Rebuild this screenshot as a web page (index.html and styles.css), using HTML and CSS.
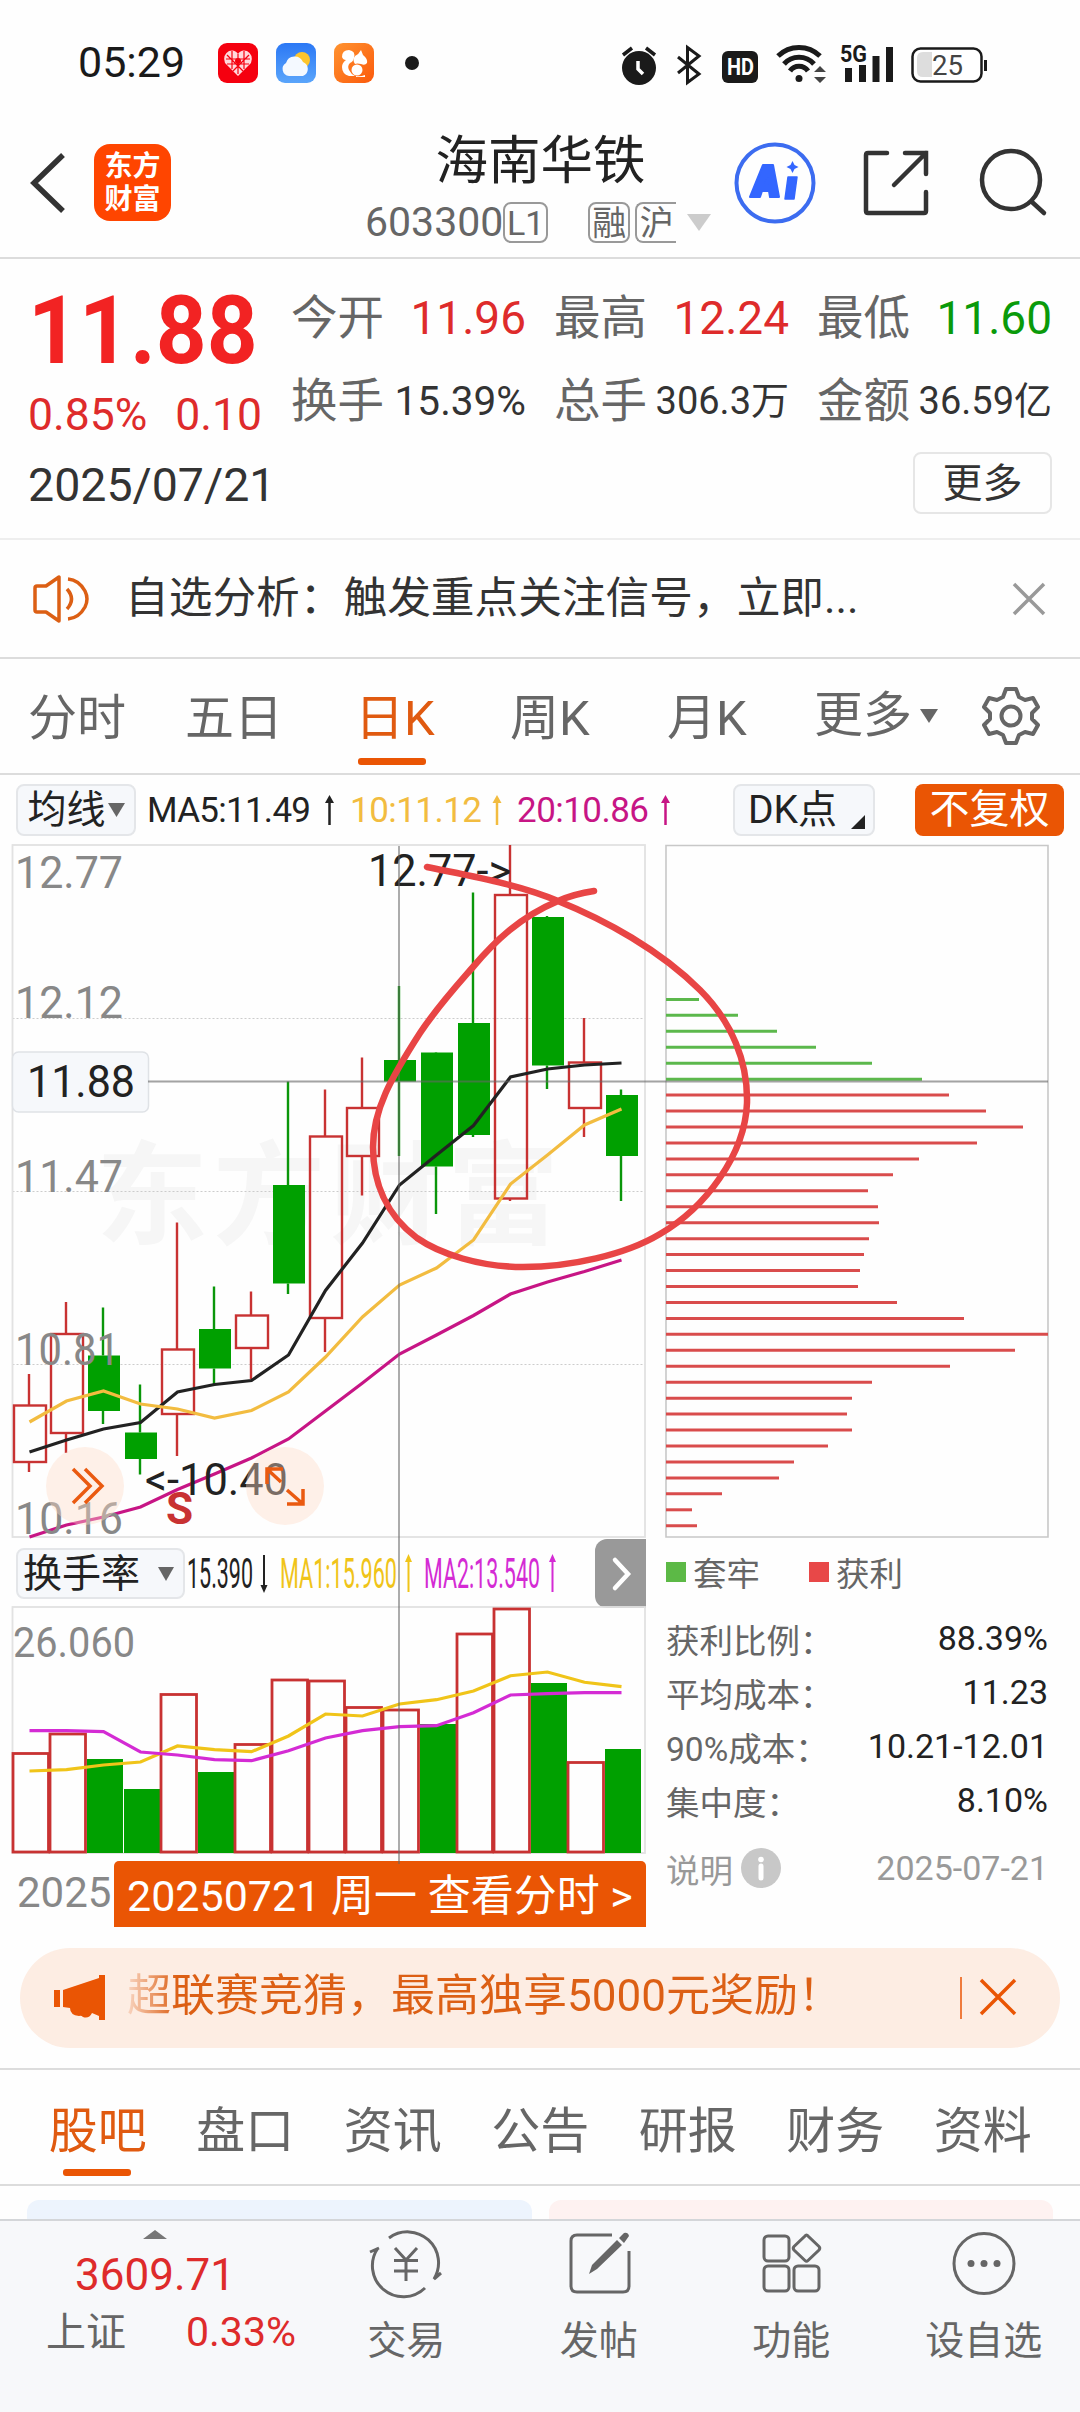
FILE: index.html
```html
<!DOCTYPE html>
<html lang="zh-CN">
  <head>
    <meta charset="UTF-8" />
    <meta name="viewport" content="width=device-width, initial-scale=1.0" />
    <title>海南华铁 603300</title>
    <link rel="stylesheet" href="styles.css">
  </head>
  <body>
    <div class="statusbar">
      <span class="clock">05:29</span>
      <svg class="app" width="40" height="40" viewBox="0 0 40 40">
        <rect width="40" height="40" rx="9" fill="#f5000f" />
        <path d="M20 33 L7 20 Q4 12 11 8 Q17 6 20 11 Q23 6 29 8 Q36 12 33 20 Z" fill="#ffd9dc" />
        <path d="M8 16h24M9 21h22M14 8v18M20 11v20M26 8v18M9 12l16 16M31 12L15 28" stroke="#f5000f" stroke-width="1.2" fill="none" />
        <circle cx="20" cy="18" r="3" fill="#f5000f" />
      </svg>
      <svg class="app" width="40" height="40" viewBox="0 0 40 40">
        <defs>
          <linearGradient id="sky" x1="0" y1="0" x2="0" y2="1">
            <stop offset="0" stop-color="#2b78f5" /><stop offset="1" stop-color="#5aa5fb" />
          </linearGradient>
        </defs>
        <rect width="40" height="40" rx="9" fill="url(#sky)" />
        <circle cx="26" cy="17" r="8" fill="#fdc52c" />
        <path d="M13 33a7 7 0 0 1-3-13a9 9 0 0 1 17-1a7.500 7.500 0 0 1 0 14z" fill="#f4f9ff" />
      </svg>
      <svg class="app" width="40" height="40" viewBox="0 0 40 40">
        <defs>
          <linearGradient id="uc" x1="0" y1="0" x2="1" y2="1">
            <stop offset="0" stop-color="#ff9330" /><stop offset="1" stop-color="#fb5a0c" />
          </linearGradient>
        </defs>
        <rect width="40" height="40" rx="9" fill="url(#uc)" />
        <path d="M8 14q0-7 7-7q7 1 5 8q-1 4-4 5q-3 3-1 7q2 4 6 6h-6q-7-2-7-9q0-4 4-7q-3 0-4-3z" fill="#fff" />
        <path d="M27 7l2 5q5 4 4 8q-2 3-6 1q-4-1-6 0q-3-4 0-8q4-2 6-6z" fill="#fff" />
        <circle cx="23" cy="27" r="5.500" fill="#fff" />
        <path d="M22 33q4 1 9-1v2h-9z" fill="#fff" />
      </svg>
      <span class="dot"></span>
      <svg class="sys" width="400" height="50" viewBox="600 35 400 50">
        <circle cx="639" cy="65" r="17" fill="#1a1a1a" />
        <path d="M638 58v8l5 5" stroke="#fff" stroke-width="3.500" fill="none" />
        <path d="M623 52l9-7M655 52l-9-7" stroke="#1a1a1a" stroke-width="3.500" />
        <path d="M678 54l21 17l-11.500 8.500v-35l11.500 8.500l-21 17" stroke="#1a1a1a" stroke-width="3" fill="none" />
        <rect x="722" y="48" width="36" height="32" rx="6" fill="#1a1a1a" />
        <text x="727" y="72" class="hd" textLength="27" lengthAdjust="spacingAndGlyphs">HD</text>
        <path d="M778 53a30 30 0 0 1 42 0M784 61a20 20 0 0 1 30 0M790 68a11 11 0 0 1 18 0" stroke="#1a1a1a" stroke-width="5" fill="none" />
        <circle cx="799" cy="75.500" r="3.500" fill="#1a1a1a" />
        <path d="M814 69h12l-6-6zM814 74h12l-6 6z" fill="#444" />
        <text x="840" y="59" class="g5" textLength="27" lengthAdjust="spacingAndGlyphs">5G</text>
        <path d="M848.500 65v14M862.500 62v17M876 53v26M889.500 44v35" stroke="#1a1a1a" stroke-width="7" />
        <rect x="912.500" y="45.500" width="69" height="33" rx="8" fill="#fff" stroke="#1a1a1a" stroke-width="2.500" />
        <path d="M932 49h-9q-6 0-6 6v13q0 6 6 6h9z" fill="#ddd" />
        <text x="932" y="72" class="batt" textLength="31" lengthAdjust="spacingAndGlyphs">25</text>
        <path d="M985.500 57v11" stroke="#1a1a1a" stroke-width="3" />
      </svg>
    </div>

    <div class="header">
      <div class="header-left">
        <svg width="40" height="64" viewBox="0 0 40 64">
          <path d="M35 4L6 32L35 60" stroke="#333" stroke-width="5.500" fill="none" />
        </svg>
        <div class="logo"><span>东方</span><span>财富</span></div>
      </div>
      <div class="stock">
        <div class="stock-name">海南华铁</div>
        <div class="stock-code">
          <span>603300</span><span class="tag l1">L1</span><span class="tag rong">融</span><span class="tag hu">沪</span>
          <svg width="24" height="17" viewBox="0 0 24 17"><path d="M0 0h24L12 17z" fill="#ccc" /></svg>
        </div>
      </div>
      <svg class="header-icons" width="330" height="90" viewBox="725 138 330 90">
        <circle cx="775" cy="183" r="38.500" fill="none" stroke="#3c6cf0" stroke-width="4" />
        <path d="M750 197L763 165H773L779 197H770L769 191H762L760 197ZM765 184H768V178Z" fill="#3366ff" fill-rule="evenodd" stroke="#3366ff" stroke-width="2" stroke-linejoin="round" />
        <path d="M788 177h9l-3 22h-9z" fill="#3366ff" stroke="#3366ff" stroke-width="1.500" stroke-linejoin="round" />
        <path d="M792.500 161l2 4l4 2l-4 2l-2 4l-2-4l-4-2l4-2z" fill="#3366ff" />
        <g stroke="#333" stroke-width="4.500" fill="none" stroke-linecap="round">
          <path d="M887 153H868Q866 153 866 155V211Q866 213 868 213H924Q926 213 926 211V192M905 153H926V174M926 153L894 185" />
          <circle cx="1011" cy="180" r="29" />
          <path d="M1032 202L1044 213" />
        </g>
      </svg>
    </div>

    <div class="quote">
      <div class="quote-top">
        <div class="price-box">
          <div class="price"><span>11.88</span></div>
          <div class="change"><span>0.85%</span><span>0.10</span></div>
        </div>
        <div class="stats">
          <div class="stat"><span>今开</span><b class="up">11.96</b></div>
          <div class="stat"><span>最高</span><b class="up">12.24</b></div>
          <div class="stat"><span>最低</span><b class="down">11.60</b></div>
          <div class="stat small"><span>换手</span><b class="rate">15.39%</b></div>
          <div class="stat small"><span>总手</span><b>306.3万</b></div>
          <div class="stat small"><span>金额</span><b>36.59亿</b></div>
        </div>
      </div>
      <div class="quote-bottom">
        <span class="date">2025/07/21</span>
        <span class="more">更多</span>
      </div>
    </div>

    <div class="notice">
      <svg width="60" height="50" viewBox="0 0 60 50">
        <path d="M3 14Q3 12 5 12H14L27 3V47L14 38H5Q3 38 3 36Z" stroke="#dc5f14" stroke-width="3.500" fill="none" stroke-linejoin="round" />
        <path d="M35 15Q44 25 35 35M36 5Q47 6 53 17Q57 25 53 33Q47 44 36 45" stroke="#dc5f14" stroke-width="3.500" fill="none" />
      </svg>
      <span class="notice-text">自选分析：触发重点关注信号，立即...</span>
      <svg width="34" height="34" viewBox="0 0 34 34"><path d="M2 2L32 32M32 2L2 32" stroke="#999" stroke-width="3.500" /></svg>
    </div>

    <div class="periods">
      <span class="p1">分时</span>
      <span class="p2">五日</span>
      <span class="p3 active">日K</span>
      <span class="p4">周K</span>
      <span class="p5">月K</span>
      <span class="p6">更多<svg width="18" height="14" viewBox="0 0 18 14"><path d="M0 0h18L9 14z" fill="#666" /></svg></span>
      <svg class="gear" width="60" height="60" viewBox="-30 -30 60 60">
        <path d="M-5 -27H5L8 -19L14 -16L22 -18L27 -9L21 -3V3L27 9L22 18L14 16L8 19L5 27H-5L-8 19L-14 16L-22 18L-27 9L-21 3V-3L-27 -9L-22 -18L-14 -16L-8 -19Z" stroke="#666" stroke-width="4" fill="none" stroke-linejoin="round" />
        <circle r="9.500" stroke="#666" stroke-width="4" fill="none" />
      </svg>
    </div>

    <div class="mabar">
      <div class="btn">均线<svg width="17" height="14" viewBox="0 0 17 14"><path d="M0 0h17L8.500 14z" fill="#666" /></svg></div>
      <svg class="ma" width="530" height="40" viewBox="145 790 530 40">
        <text x="147" y="822" fill="#222" textLength="164">MA5:11.49</text>
        <text x="350" y="822" fill="#f2bc40" textLength="132">10:11.12</text>
        <text x="517" y="822" fill="#c71585" textLength="132">20:10.86</text>
        <g stroke-width="2.500">
          <path d="M329.500 799V825" stroke="#222" /><path d="M325 803l4.500-8l4.500 8z" fill="#222" />
          <path d="M497 799V825" stroke="#f2bc40" /><path d="M492.500 803l4.500-8l4.500 8z" fill="#f2bc40" />
          <path d="M665.500 799V825" stroke="#c71585" /><path d="M661 803l4.500-8l4.500 8z" fill="#c71585" />
        </g>
      </svg>
      <div class="btn dk">DK点<svg width="14" height="14" viewBox="0 0 14 14"><path d="M14 0V14H0z" fill="#222" /></svg></div>
      <div class="btn orange">不复权</div>
    </div>

    <div class="charts">
      <div class="left">
        <svg id="kline" width="660" height="700" viewBox="0 840 660 700"></svg>
        <div class="volbar">
          <div class="btn">换手率<svg width="16" height="14" viewBox="0 0 16 14"><path d="M0 0h16L8 14z" fill="#666" /></svg></div>
          <svg class="vma" width="400" height="50" viewBox="187 1548 400 50">
            <text x="187" y="1588" fill="#222" textLength="66" lengthAdjust="spacingAndGlyphs">15.390</text>
            <text x="280" y="1588" fill="#f0c419" textLength="117" lengthAdjust="spacingAndGlyphs">MA1:15.960</text>
            <text x="424" y="1588" fill="#d42bd4" textLength="116" lengthAdjust="spacingAndGlyphs">MA2:13.540</text>
            <g stroke-width="2">
              <path d="M264 1555V1588" stroke="#222" /><path d="M260.500 1585h7l-3.500 8z" fill="#222" />
              <path d="M408.500 1559V1592" stroke="#f0c419" /><path d="M405 1562h7l-3.500-8z" fill="#f0c419" />
              <path d="M552.500 1559V1592" stroke="#d42bd4" /><path d="M549 1562h7l-3.500-8z" fill="#d42bd4" />
            </g>
          </svg>
          <div class="next"><svg width="20" height="34" viewBox="0 0 20 34"><path d="M3 3L16 17L3 31" stroke="#fff" stroke-width="4.500" fill="none" stroke-linecap="round" /></svg></div>
        </div>
        <svg id="volume" width="660" height="252" viewBox="0 1606 660 252"></svg>
        <div class="dates">
          <span class="year">2025</span>
          <span class="view">20250721 周一 查看分时 &gt;</span>
        </div>
      </div>
      <div class="right">
        <svg id="chips" width="420" height="700" viewBox="660 840 420 700"></svg>
        <div class="legend"><i class="green"></i>套牢<i class="red"></i>获利</div>
        <div class="info"><span>获利比例：</span><b>88.39%</b></div>
        <div class="info"><span>平均成本：</span><b>11.23</b></div>
        <div class="info"><span>90%成本：</span><b>10.21-12.01</b></div>
        <div class="info"><span>集中度：</span><b>8.10%</b></div>
        <div class="info note">
          <span>说明</span>
          <svg width="40" height="40" viewBox="0 0 40 40">
            <circle cx="20" cy="20" r="20" fill="#c8c8c8" />
            <circle cx="20" cy="11.500" r="2.800" fill="#fff" />
            <path d="M20 18v12" stroke="#fff" stroke-width="5" stroke-linecap="round" />
          </svg>
          <b>2025-07-21</b>
        </div>
      </div>
      <!-- crosshair and hand-drawn mark over both charts -->
      <svg class="overlay" width="1080" height="1090" viewBox="0 840 1080 1090">
        <path d="M148 1081.500H1048M399 846V1864" stroke="#666" stroke-opacity=".6" stroke-width="1.800" />
        <path d="M427 867C470 876 518 884 558 901C605 920 660 950 700 990C732 1022 748 1062 747 1103C745 1155 705 1208 660 1234C625 1255 570 1267 523 1267C480 1267 440 1254 417 1238C386 1215 373 1182 373 1147C373 1110 391 1078 420 1033C438 1006 460 982 473 967C495 941 520 917 558 901Q574 894 594 891" stroke="#e84545" stroke-width="6.500" fill="none" stroke-linecap="round" />
      </svg>
    </div>

    <div class="banner">
      <svg width="54" height="46" viewBox="0 0 54 46">
        <path d="M1 15h6v17H1zM10 15L46 3V0H52V45H46V41L39 38Q36 44 30 42Q28 40 26 41Q17 40 17 33L10 32Z" fill="#ea5504" />
      </svg>
      <span class="banner-text">超联赛竞猜，最高独享5000元奖励！</span>
      <svg class="banner-close" width="60" height="42" viewBox="0 0 60 42">
        <path d="M1 0V42" stroke="#ea5504" stroke-width="1.500" />
        <path d="M21 3L55 37M55 3L21 37" stroke="#ea5504" stroke-width="3.500" />
      </svg>
    </div>

    <div class="sections">
      <span class="active">股吧</span>
      <span>盘口</span>
      <span>资讯</span>
      <span>公告</span>
      <span>研报</span>
      <span>财务</span>
      <span>资料</span>
    </div>
    <div class="cards"><div class="card blue"></div><div class="card pink"></div></div>

    <div class="toolbar">
      <div class="index">
        <svg width="24" height="9" viewBox="0 0 24 9"><path d="M0 9L12 0L24 9z" fill="#777" /></svg>
        <div class="index-val">3609.71</div>
        <div class="index-row"><span>上证</span><b>0.33%</b></div>
      </div>
      <div class="tool">
        <svg width="80" height="70" viewBox="366 2228 80 70" fill="none" stroke="#666" stroke-width="3">
          <path d="M389 2238A31 31 0 0 1 434 2279L441 2273M378 2248A31 31 0 0 0 425 2288M370 2252L379 2248" />
          <path d="M395 2248L406 2260L417 2248M406 2259V2281M394 2260.500H418M394 2271H418" />
        </svg>
        <span>交易</span>
      </div>
      <div class="tool">
        <svg width="80" height="70" viewBox="558 2228 80 70" fill="none" stroke="#666" stroke-width="3">
          <path d="M611 2235H576Q570 2235 570 2241V2286Q570 2292 576 2292H622Q628 2292 628 2286V2251" />
          <path d="M588 2274L591 2265L616 2240L621 2245L596 2269ZM618 2238L623 2233Q627 2232 628 2236L623 2243Z" fill="#666" stroke="none" />
        </svg>
        <span>发帖</span>
      </div>
      <div class="tool">
        <svg width="80" height="70" viewBox="750 2228 80 70" fill="none" stroke="#666" stroke-width="3">
          <rect x="763" y="2236" width="25" height="25" rx="4" />
          <rect x="763" y="2266" width="25" height="25" rx="4" />
          <rect x="793" y="2266" width="25" height="25" rx="4" />
          <path d="M804 2236Q805.500 2234 807 2236L818 2246.500Q819.500 2248 818 2250L807 2260.500Q805.500 2262 804 2260.500L793 2250Q791.500 2248 793 2246.500Z" />
        </svg>
        <span>功能</span>
      </div>
      <div class="tool">
        <svg width="80" height="70" viewBox="943 2228 80 70" fill="none" stroke="#666" stroke-width="3">
          <circle cx="983" cy="2263.500" r="30" />
          <g fill="#666" stroke="none"><circle cx="970" cy="2263.500" r="3.500" /><circle cx="983" cy="2263.500" r="3.500" /><circle cx="996" cy="2263.500" r="3.500" /></g>
        </svg>
        <span>设自选</span>
      </div>
    </div>
    <script src="script.js"></script>
  </body>
</html>
```
FILE: styles.css
```css
* {
  box-sizing: border-box;
}
body {
  margin: 0;
  width: 1080px;
  height: 2412px;
  overflow: hidden;
  background: #fefefe;
  color: #333;
  font-family: Roboto, "Noto Sans CJK SC", sans-serif;
}
svg {
  display: block;
  flex: none;
  overflow: visible;
}
b {
  font-weight: normal;
}
.statusbar {
  display: flex;
  align-items: center;
  height: 90px;
  padding: 35px 80px 0 78px;
  line-height: 55px;
}
.clock {
  width: 141px;
  font-size: 43px;
  color: #1a1a1a;
}
.app {
  margin-right: 18px;
}
.dot {
  width: 14px;
  height: 14px;
  margin-left: 13px;
  border-radius: 50%;
  background: #1a1a1a;
}
.sys {
  margin-left: 181px;
}
.hd {
  font: bold 24px Roboto;
  fill: #fff;
}
.g5 {
  font: bold 24px Roboto;
  fill: #1a1a1a;
}
.batt {
  font: 27px Roboto;
  fill: #444;
}
.header {
  display: flex;
  height: 169px;
  border-bottom: 2px solid #dcdcdc;
}
.header-left {
  display: flex;
  align-items: center;
  width: 365px;
  padding: 18px 0 0 28px;
}
.logo {
  width: 77px;
  height: 77px;
  margin-left: 26px;
  padding-top: 6px;
  border-radius: 16px;
  background: #ff4500;
  color: #fff;
  font-size: 28px;
  font-weight: bold;
  line-height: 33px;
  text-align: center;
}
.logo span {
  display: block;
}
.stock {
  width: 351px;
  padding-top: 38px;
}
.stock-name {
  height: 66px;
  font-size: 52.500px;
  line-height: 66px;
  text-align: center;
  color: #222;
}
.stock-code {
  display: flex;
  align-items: center;
  height: 56px;
  font-size: 41px;
  color: #666;
}
.tag {
  height: 41px;
  border: 2px solid #999;
  border-radius: 8px;
  font-size: 34px;
  line-height: 38px;
  text-align: center;
}
.l1 {
  width: 45px;
}
.rong {
  width: 42px;
  margin-left: 40px;
}
.hu {
  width: 41px;
  margin: 0 11px 0 5px;
  border-right: none;
  border-radius: 8px 0 0 8px;
}
.header-icons {
  margin: 48px 0 0 9px;
}
.quote {
  height: 281px;
  padding: 24px 28px 0;
  border-bottom: 2px solid #eee;
}
.quote-top {
  display: flex;
  height: 167px;
}
.price-box {
  width: 264px;
}
.price {
  height: 96px;
  color: #f22323;
  font-size: 95px;
  font-weight: bold;
  line-height: 96px;
}
.price span {
  display: inline-block;
  transform: scaleX(0.935);
  transform-origin: left;
}
.change {
  display: flex;
  gap: 28px;
  color: #de2b2b;
  font-size: 44.500px;
  line-height: 73px;
}
.stats {
  display: grid;
  grid-template-columns: repeat(3, 235px);
  grid-auto-rows: 83px;
  column-gap: 28px;
}
.stat {
  display: flex;
  justify-content: space-between;
  color: #666;
  font-size: 46.500px;
  line-height: 70px;
}
.stat b {
  font-size: 46px;
}
.stat.small b {
  color: #333;
  font-size: 38px;
}
.stat.small .rate {
  font-size: 40.500px;
}
.stat .up {
  color: #de2b2b;
}
.stat .down {
  color: #0a9a0a;
}
.quote-bottom {
  display: flex;
  justify-content: space-between;
  align-items: flex-start;
}
.date {
  font-size: 46.500px;
  line-height: 70px;
}
.more {
  width: 139px;
  height: 62px;
  margin-top: 2px;
  border: 2px solid #e6e6e6;
  border-radius: 8px;
  font-size: 40px;
  line-height: 60px;
  text-align: center;
}
.notice {
  display: flex;
  align-items: center;
  height: 119px;
  padding: 0 34px 0 32px;
  border-bottom: 2px solid #dcdcdc;
}
.notice-text {
  flex: 1;
  height: 60px;
  margin-left: 33px;
  font-size: 43.700px;
  line-height: 58px;
}
.periods {
  position: relative;
  display: flex;
  height: 116px;
  border-bottom: 2px solid #dcdcdc;
  color: #666;
  font-size: 49px;
  line-height: 120px;
}
.p1 { padding-left: 28px; width: 185px; }
.p2 { width: 170px; }
.p3 { width: 155px; }
.p4 { width: 157px; }
.p5 { width: 147px; }
.p6 {
  display: flex;
  align-items: center;
  gap: 8px;
  width: 167px;
}
.periods .active,
.sections .active {
  position: relative;
  color: #e05a10;
}
.periods .active::after,
.sections .active::after {
  content: "";
  position: absolute;
  left: 3px;
  bottom: 8px;
  width: 68px;
  height: 7px;
  border-radius: 3px;
  background: #ea5504;
}
.gear {
  margin-top: 27px;
}
.mabar {
  display: flex;
  align-items: center;
  height: 66px;
  padding: 4px 16px 0;
}
.btn {
  display: flex;
  align-items: center;
  justify-content: center;
  gap: 2px;
  width: 120px;
  height: 52px;
  border: 2px solid #e4e6e9;
  border-radius: 8px;
  background: #f6f8fb;
  color: #222;
  font-size: 39px;
  line-height: 48px;
}
.ma {
  margin-left: 9px;
}
.ma text {
  font-size: 35px;
}
.dk {
  width: 142px;
  margin-left: 58px;
  justify-content: flex-start;
  padding-left: 13px;
  gap: 14px;
}
.dk svg {
  margin-top: 24px;
}
.orange {
  width: 149px;
  margin-left: 40px;
  border: none;
  background: #ea5504;
  color: #fff;
  font-size: 40px;
  line-height: 54px;
}
.charts {
  position: relative;
  display: flex;
  height: 1092px;
  margin-top: -1px;
}
.left {
  width: 660px;
}
.overlay {
  position: absolute;
  left: 0;
  top: 0;
}
.label {
  font-size: 44px;
  fill: #888;
}
.watermark {
  font-size: 112px;
  font-weight: 700;
  fill: #f6f6f6;
}
.volbar {
  display: flex;
  align-items: flex-start;
  height: 65px;
  padding: 8px 0 0 16px;
}
.volbar .btn {
  width: 169px;
  height: 51px;
  gap: 18px;
  padding-right: 4px;
}
.vma {
  margin-left: 2px;
}
.vma text {
  font-size: 43px;
}
.next {
  display: flex;
  align-items: center;
  justify-content: center;
  width: 51px;
  height: 69px;
  margin: -9px 0 0 8px;
  padding-left: 3px;
  border-radius: 12px 0 0 12px;
  background: #999;
}
.dates {
  display: flex;
  padding: 4px 0 0 17px;
  font-size: 42px;
}
.year {
  width: 97px;
  color: #888;
  line-height: 64px;
}
.view {
  width: 532px;
  height: 66px;
  padding-left: 13px;
  border-radius: 5px 5px 0 0;
  background: #ea5504;
  color: #fff;
  font-size: 43px;
  line-height: 70px;
  white-space: nowrap;
}
.right {
  width: 420px;
  padding-right: 32px;
  color: #666;
  font-size: 33.500px;
}
.legend {
  display: flex;
  align-items: center;
  height: 71px;
  padding: 0 0 8px 6px;
}
.legend i {
  width: 20px;
  height: 20px;
  margin-right: 7px;
}
.green {
  background: #5cb946;
}
.legend .red {
  margin-left: 49px;
  background: #e84848;
}
.info {
  display: flex;
  align-items: center;
  justify-content: space-between;
  height: 54px;
  padding-left: 6px;
}
.info b {
  color: #222;
  font-size: 34px;
}
.note {
  height: 82px;
  color: #999;
}
.note svg {
  margin: 0 auto 0 8px;
}
.note b {
  color: #999;
}
.banner {
  display: flex;
  align-items: center;
  width: 1040px;
  height: 100px;
  margin: 16px 20px 20px;
  padding: 0 40px 0 33px;
  border-radius: 50px;
  background: #fdede3;
  color: #dc5f14;
}
.banner-text {
  flex: 1;
  height: 60px;
  margin-left: 20px;
  font-size: 44px;
  line-height: 57px;
  background: linear-gradient(90deg, #f9d6c2, #dc5f14 50px);
  -webkit-background-clip: text;
  background-clip: text;
  color: transparent;
}
.sections {
  display: flex;
  height: 118px;
  padding-left: 24px;
  border-top: 2px solid #dcdcdc;
  border-bottom: 2px solid #dcdcdc;
  color: #666;
  font-size: 49px;
  line-height: 124px;
}
.sections span {
  width: 147.500px;
  text-align: center;
}
.sections .active::after {
  left: 39px;
}
.cards {
  display: flex;
  gap: 17px;
  height: 33px;
  padding: 14px 27px 0;
}
.card {
  flex: 1;
  border-radius: 12px 12px 0 0;
}
.blue {
  background: #edf4fd;
}
.pink {
  background: #fef2f1;
}
.toolbar {
  display: flex;
  height: 195px;
  border-top: 2px solid #d4d6d9;
  background: #f7f8fa;
  color: #666;
}
.index {
  width: 310px;
  padding-top: 9px;
}
.index svg {
  margin: 0 auto;
}
.index-val {
  padding-left: 75px;
  color: #de2b2b;
  font-size: 44px;
  line-height: 73px;
}
.index-row {
  display: flex;
  gap: 60px;
  padding-left: 46px;
  font-size: 40px;
  line-height: 41px;
}
.index-row b {
  color: #de2b2b;
  font-size: 41px;
}
.tool {
  display: flex;
  flex-direction: column;
  align-items: center;
  width: 192.500px;
  padding-top: 7px;
  font-size: 39px;
}
.tool span {
  line-height: 86px;
}
```
FILE: script.js
```js
const RED = "#c83232";
const GREEN = "#00a000";

// color, high, body top, body bottom, low
const candles = [
  ["r", 1374, 1405.5, 1462, 1472],
  ["r", 1302, 1334, 1433, 1453],
  ["g", 1307.5, 1355.5, 1411, 1424],
  ["g", 1384.5, 1432.5, 1459, 1474.5],
  ["r", 1222.5, 1349.5, 1414, 1456],
  ["g", 1286.5, 1329, 1368.5, 1386],
  ["r", 1291.5, 1315.5, 1348, 1379],
  ["g", 1081.5, 1185, 1283.5, 1294],
  ["r", 1089.5, 1136.5, 1318, 1352],
  ["r", 1057.5, 1108, 1156, 1195.5],
  ["g", 986, 1060, 1081.5, 1156],
  ["g", 1052, 1052.5, 1166.5, 1214],
  ["g", 892.5, 1023, 1135, 1137],
  ["r", 845, 895, 1198.5, 1201],
  ["g", 916, 917, 1065.5, 1089],
  ["r", 1018, 1062.5, 1108, 1137],
  ["g", 1089.5, 1095, 1156, 1201],
];
const ma5 = [1452, 1440, 1429, 1422.5, 1392, 1384.5, 1380.5, 1355, 1290.5, 1243, 1185, 1155, 1125.5, 1077, 1069, 1065, 1063];
const ma10 = [1422, 1401, 1391, 1404, 1409, 1418, 1410.5, 1392, 1357, 1317, 1285, 1268, 1240, 1184, 1155, 1125, 1109];
const ma20 = [1537, 1525, 1517, 1507, 1489.5, 1474, 1458, 1439, 1411, 1383, 1354, 1335, 1315.5, 1294, 1282, 1271.5, 1260];

const volumes = [
  ["r", 1753.5], ["r", 1734], ["g", 1760], ["g", 1790], ["r", 1694.5], ["g", 1773],
  ["r", 1744.5], ["r", 1680], ["r", 1681], ["r", 1707.5], ["r", 1710], ["g", 1725],
  ["r", 1634], ["r", 1609], ["g", 1684], ["r", 1762.5], ["g", 1750],
];
const vma1 = [1772, 1770.7, 1766, 1763, 1747, 1750.7, 1752.7, 1737, 1715, 1717, 1705, 1700.7, 1692, 1676.7, 1673, 1683.3, 1687.7];
const vma2 = [1731.7, 1731.7, 1732.7, 1753, 1756, 1760.7, 1761.7, 1751.7, 1739, 1731.7, 1727.7, 1726.7, 1713.7, 1696, 1694.7, 1693.7, 1693.7];

const lossBars = [33, 72, 111, 150, 206, 256];
const gainBars = [283, 320, 357, 311, 253, 227, 202, 212, 213, 203, 198, 194, 192, 231, 298, 382, 349, 284, 206, 186, 181, 186, 162, 128, 113, 56, 26, 31];

function centerX(i) {
  return 29 + 37 * i;
}

function polyline(points, color) {
  const pts = points.map((y, i) => centerX(i) + 0.5 + "," + y).join(" ");
  return `<polyline points="${pts}" fill="none" stroke="${color}" stroke-width="3.2"/>`;
}

function label(x, y, text, width, color) {
  return `<text class="label" x="${x}" y="${y}" textLength="${width}" lengthAdjust="spacingAndGlyphs"${color ? ` style="fill:${color}"` : ""}>${text}</text>`;
}

function drawKline() {
  let s = "";
  ["东", "方", "财", "富"].forEach((c, i) => {
    s += `<text class="watermark" x="${96 + 117 * i}" y="1236">${c}</text>`;
  });
  s += `<path d="M12.5 1018.500H645M12.500 1191.500H645M12.500 1364.500H645" stroke="#ccc" stroke-width="1" stroke-dasharray="2 2"/>`;
  s += `<rect x="12.500" y="845" width="632.500" height="692" fill="none" stroke="#e2e2e2" stroke-width="1.800"/>`;
  candles.forEach(([c, high, top, bottom, low], i) => {
    const x = centerX(i);
    const color = c === "r" ? RED : "#0a960a";
    s += `<path d="M${x} ${high}V${top}M${x} ${bottom}V${low}" stroke="${color}" stroke-width="2.4"/>`;
    if (c === "r") {
      s += `<rect x="${x - 15}" y="${top}" width="32" height="${bottom - top}" fill="none" stroke="${RED}" stroke-width="2.4"/>`;
    } else {
      s += `<rect x="${x - 15}" y="${top}" width="32" height="${bottom - top}" fill="${GREEN}"/>`;
    }
  });
  s += polyline(ma5, "#222") + polyline(ma10, "#f2bc40") + polyline(ma20, "#c71585");
  s += label(15, 888, "12.77", 108) + label(15, 1018, "12.12", 108) + label(15, 1192, "11.47", 108);
  s += label(15, 1365, "10.81", 105) + label(15, 1534, "10.16", 108);
  s += label(368, 886, "12.77-&gt;", 143, "#222") + label(145, 1495, "&lt;-10.40", 143, "#222");
  s += `<text x="166" y="1524" font-size="44" font-weight="700" fill="#c83232">S</text>`;
  s += `<rect x="12.500" y="1052" width="136" height="60" rx="6" fill="#f6f8fb" stroke="#dfe2e6" stroke-width="1.500"/>`;
  s += label(27, 1097, "11.88", 108, "#222");
  s += `<g fill="#ffdcc8" fill-opacity=".4"><circle cx="85" cy="1486" r="39"/><circle cx="285" cy="1486" r="39"/></g>`;
  s += `<g fill="none" stroke="#ea5a10" stroke-width="3.500"><path d="M73 1469L90 1486L73 1503M85 1469L102 1486L85 1503"/>`;
  s += `<path d="M267 1484V1469H283M267 1469L281 1482M287 1490L303 1504M303 1489V1504H287"/></g>`;
  document.getElementById("kline").innerHTML = s;
}

function drawVolume() {
  let s = `<rect x="12.500" y="1608" width="632.500" height="246" fill="none" stroke="#e2e2e2" stroke-width="1.800"/>`;
  s += `<text x="13" y="1658" font-size="42" fill="#888" textLength="122" lengthAdjust="spacingAndGlyphs">26.060</text>`;
  volumes.forEach(([c, top], i) => {
    const x = 12 + 37 * i;
    if (c === "r") {
      s += `<rect x="${x + 1}" y="${top + 1}" width="35.500" height="${1854 - top - 2}" fill="none" stroke="${RED}" stroke-width="2.8"/>`;
    } else {
      s += `<rect x="${x + 1}" y="${top}" width="36" height="${1854 - top}" fill="${GREEN}"/>`;
    }
  });
  s += polyline(vma1, "#f0c419") + polyline(vma2, "#d42bd4");
  document.getElementById("volume").innerHTML = s;
}

function drawChips() {
  let s = `<path d="M666 845.500H1048V1537H666Z" fill="none" stroke="#c8c8c8" stroke-width="1.600"/>`;
  lossBars.concat(gainBars).forEach((w, i) => {
    const y = 999.4 + 15.95 * i;
    const color = i < lossBars.length ? "#5cb84c" : "#d94c4c";
    s += `<path d="M666 ${y}h${w}" stroke="${color}" stroke-width="3"/>`;
  });
  document.getElementById("chips").innerHTML = s;
}

drawKline();
drawVolume();
drawChips();
```
